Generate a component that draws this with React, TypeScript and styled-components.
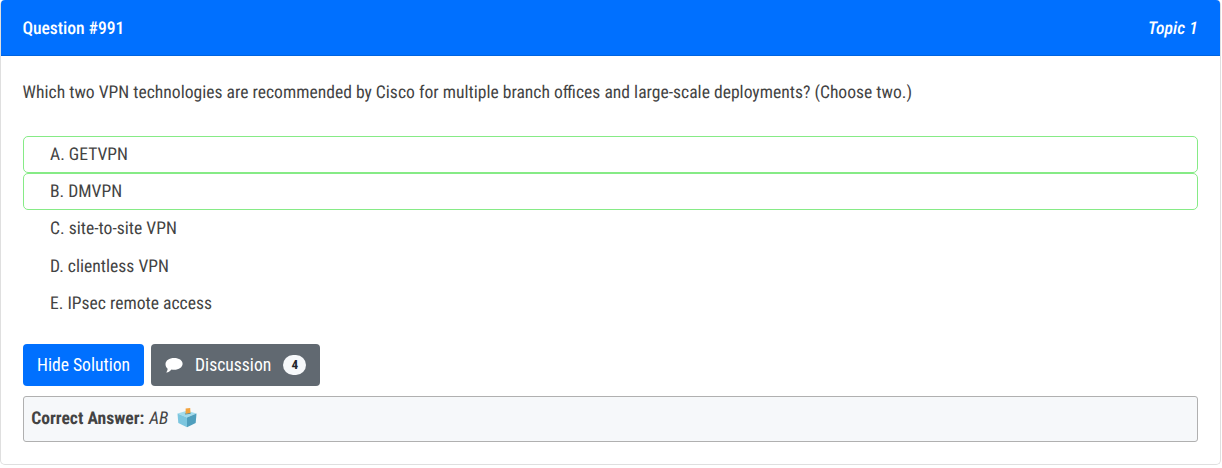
import React from "react";
import styled, { createGlobalStyle } from "styled-components";

const Global = createGlobalStyle`
  *, *::before, *::after { box-sizing: border-box; }
  body {
    margin: 0;
    background: #fff;
    color: #434343;
    font-family: "Roboto Condensed", Roboto, "Liberation Sans", sans-serif;
    font-stretch: 75%;
    font-size: 17.6px;
    line-height: 26px;
    text-rendering: geometricPrecision;
  }
`;

const Card = styled.article`
  width: 1221px;
  height: 465px;
  border: 1px solid #dfdfdf;
  border-top: 0;
  border-radius: 5px;
  background: #fff;
`;

const Header = styled.header`
  display: flex;
  justify-content: space-between;
  height: 56px;
  padding: 16px 22px 0 21.5px;
  border-bottom: 1px solid #0064e0;
  border-radius: 4px 4px 0 0;
  background: #0070ff;
  color: #fff;
  font-weight: 500;
  letter-spacing: -0.05px;
`;

const Topic = styled.span`
  font-style: italic;
  letter-spacing: 0.1px;
`;

const Body = styled.div`
  padding: 24px 22px 0;
`;

const Question = styled.p`
  margin: 0 0 29.5px -0.4px;
`;

const Choices = styled.ul`
  list-style: none;
  margin: 0;
  padding: 0;
`;

const Choice = styled.li<{ $correct?: boolean }>`
  height: 37.3px;
  padding: 5.2px 26px 0;
  border: 1px solid ${(p) => (p.$correct ? "#86eb86" : "transparent")};
  border-radius: 5px;
`;

const Actions = styled.div`
  display: flex;
  gap: 7px;
  margin-top: 22px;
`;

const Button = styled.button<{ $tone: "primary" | "secondary" }>`
  display: flex;
  align-items: center;
  height: 42px;
  padding: 0 14px;
  border: 0;
  border-radius: 4px;
  background: ${(p) => (p.$tone === "primary" ? "#0070ff" : "#616971")};
  color: #fff;
  font: inherit;
`;

const Bubble = styled.svg`
  width: 18px;
  height: 17px;
  margin-right: 12px;
`;

const Count = styled.span`
  width: 23px;
  height: 20px;
  margin-left: 12px;
  border-radius: 10px;
  background: #f6f8fa;
  color: #212529;
  font-size: 13.2px;
  font-weight: 700;
  line-height: 20px;
  text-align: center;
`;

const Answer = styled.div`
  display: flex;
  height: 46px;
  margin-top: 10px;
  padding: 9px 7.2px;
  border: 1px solid #b0b0b0;
  border-radius: 3px;
  background: #f6f8fa;
`;

const Key = styled.em`
  margin: 0 8.5px 0 4.8px;
`;

const BallotBox = styled.svg`
  width: 20px;
  height: 20px;
  margin-top: 2.5px;
`;

const choices = [
  { text: "A. GETVPN", correct: true },
  { text: "B. DMVPN", correct: true },
  { text: "C. site-to-site VPN" },
  { text: "D. clientless VPN" },
  { text: "E. IPsec remote access" },
];

export default function App() {
  return (
    <>
      <Global />
      <Card>
        <Header>
          <span>Question #991</span>
          <Topic>Topic 1</Topic>
        </Header>
        <Body>
          <Question>
            Which two VPN technologies are recommended by Cisco for multiple branch offices and large-scale deployments? (Choose two.)
          </Question>
          <Choices>
            {choices.map((c) => (
              <Choice key={c.text} $correct={c.correct}>{c.text}</Choice>
            ))}
          </Choices>
          <Actions>
            <Button $tone="primary">Hide Solution</Button>
            <Button $tone="secondary">
              <Bubble viewBox="0 0 18 17" aria-hidden>
                <path fill="#fff" d="M9.2 2C14 2 17.6 4.4 17.6 7.8s-3.6 6-8.4 6c-1 0-1.9-.1-2.7-.3C5.3 14.9 3.5 16.3 1.6 16.5c-.4 0-.4-.3-.2-.5.7-.8 1.2-2 1.2-3.3C1.3 11.6.5 9.9.5 8 .5 4.6 4.3 2 9.2 2z" />
              </Bubble>
              Discussion
              <Count>4</Count>
            </Button>
          </Actions>
          <Answer>
            <strong>Correct Answer:</strong>
            <Key>AB</Key>
            <BallotBox viewBox="0 0 20 20" aria-hidden>
              <path fill="#a2dced" d="M.5 5.6 10 2.8l9.5 2.8L10 9.4z" />
              <path fill="#7cc6df" d="M.5 5.6 10 9.4V19.3L1.3 15z" />
              <path fill="#4f9fbd" d="M19.5 5.6 10 9.4v9.9l8.7-4.3z" />
              <path fill="#4f8ba0" d="M7.8 5.4l5.4-.6.6.9-5.6.8z" />
              <path fill="#f2a33f" d="M8.6.6l4.6-.6.3 5-4.9.8z" />
            </BallotBox>
          </Answer>
        </Body>
      </Card>
    </>
  );
}
